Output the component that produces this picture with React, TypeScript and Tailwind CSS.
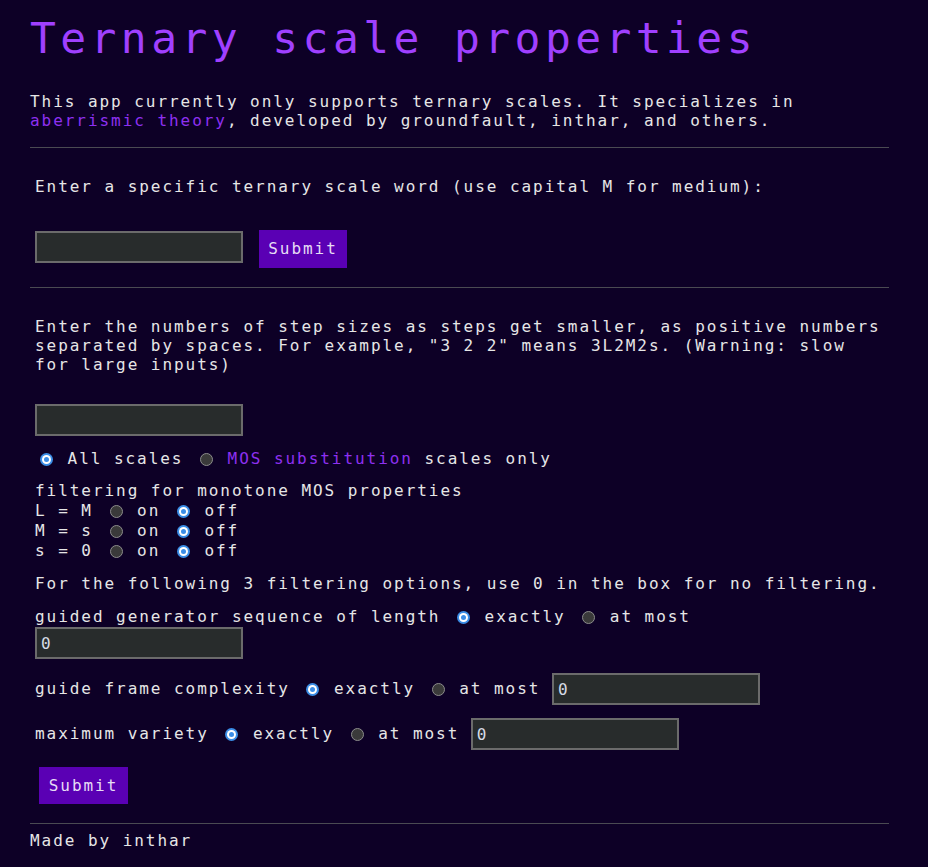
import { useState } from "react";

function Radio({ checked }: { checked: boolean }) {
  return checked ? (
    <span className="ml-[5px] mr-[3px] flex h-[13px] w-[13px] shrink-0 items-center justify-center rounded-full bg-[#3b8de6]">
      <span className="flex h-[9px] w-[9px] items-center justify-center rounded-full bg-white">
        <span className="h-[5px] w-[5px] rounded-full bg-[#3b8de6]" />
      </span>
    </span>
  ) : (
    <span className="ml-[5px] mr-[3px] h-[13px] w-[13px] shrink-0 rounded-full border border-[#8c8c8c] bg-[#3a3a3a]" />
  );
}

function TextBox({ value }: { value?: string }) {
  return (
    <input
      type="text"
      defaultValue={value}
      className="h-[32px] w-[208px] shrink-0 border-2 border-[#6b6b6b] bg-[#282c2c] px-[4px] text-[#d6dbe6] outline-none"
    />
  );
}

function Toggle({ label }: { label: string }) {
  return (
    <div className="flex h-[20px] items-center whitespace-pre">
      <span>{label} </span>
      <Radio checked={false} />
      <span> on </span>
      <Radio checked={true} />
      <span> off</span>
    </div>
  );
}

export default function App() {
  const [word] = useState("");

  return (
    <div className="min-h-[867px] bg-[#0d0026] pl-[30px] pr-[39px] pt-[12px] font-['DejaVu_Sans_Mono',monospace] text-[16px] tracking-[1.95px] text-[#e6e6e6]">
      <h1 className="text-[43px] leading-[52px] tracking-[4.4px] text-[#a040ff]">Ternary scale properties</h1>
      <p className="mt-[28px] leading-[19px]">
        This app currently only supports ternary scales. It specializes in{" "}
        <a href="#" className="text-[#8d30f0]">
          aberrismic theory
        </a>
        , developed by groundfault, inthar, and others.
      </p>

      <div className="mt-[17px] border-t border-[#4a4a52]" />

      <section className="pl-[5px] pr-[5px] pt-[29px]">
        <p className="leading-[19px]">Enter a specific ternary scale word (use capital M for medium):</p>
        <div className="mt-[34px] flex items-start">
          <div className="mt-px">
            <TextBox value={word} />
          </div>
          <button className="ml-[16px] h-[38px] w-[88px] bg-[#5a00b4] text-[#e6dcf5]">Submit</button>
        </div>
      </section>

      <div className="mt-[19px] border-t border-[#4a4a52]" />

      <section className="pl-[5px] pr-[5px] pt-[29px]">
        <p className="leading-[19px]">
          Enter the numbers of step sizes as steps get smaller, as positive numbers separated by spaces. For example,
          "3 2 2" means 3L2M2s. (Warning: slow for large inputs)
        </p>
        <div className="mt-[30px]">
          <TextBox />
        </div>

        <div className="mt-[13px] flex h-[20px] items-center whitespace-pre">
          <Radio checked={true} />
          <span> All scales </span>
          <Radio checked={false} />
          <span> </span>
          <a href="#" className="text-[#8d30f0]">
            MOS substitution
          </a>
          <span> scales only</span>
        </div>

        <div className="mt-[12px]">
          <div className="h-[20px] leading-[20px]">filtering for monotone MOS properties</div>
          <Toggle label="L = M" />
          <Toggle label="M = s" />
          <Toggle label="s = 0" />
        </div>

        <p className="mt-[13px] leading-[19px]">For the following 3 filtering options, use 0 in the box for no filtering.</p>

        <div className="mt-[14px] flex h-[20px] items-center whitespace-pre">
          <span>guided generator sequence of length </span>
          <Radio checked={true} />
          <span> exactly </span>
          <Radio checked={false} />
          <span> at most</span>
        </div>
        <div>
          <TextBox value="0" />
        </div>

        <div className="mt-[14px] flex items-center whitespace-pre">
          <span>guide frame complexity </span>
          <Radio checked={true} />
          <span> exactly </span>
          <Radio checked={false} />
          <span> at most </span>
          <TextBox value="0" />
        </div>

        <div className="mt-[13px] flex items-center whitespace-pre">
          <span>maximum variety </span>
          <Radio checked={true} />
          <span> exactly </span>
          <Radio checked={false} />
          <span> at most </span>
          <TextBox value="0" />
        </div>

        <button className="ml-[4px] mt-[17px] h-[37px] w-[89px] bg-[#5a00b4] text-[#e6dcf5]">Submit</button>
      </section>

      <div className="mt-[19px] border-t border-[#4a4a52]" />

      <footer className="mt-[7px] leading-[19px]">Made by inthar</footer>
    </div>
  );
}
